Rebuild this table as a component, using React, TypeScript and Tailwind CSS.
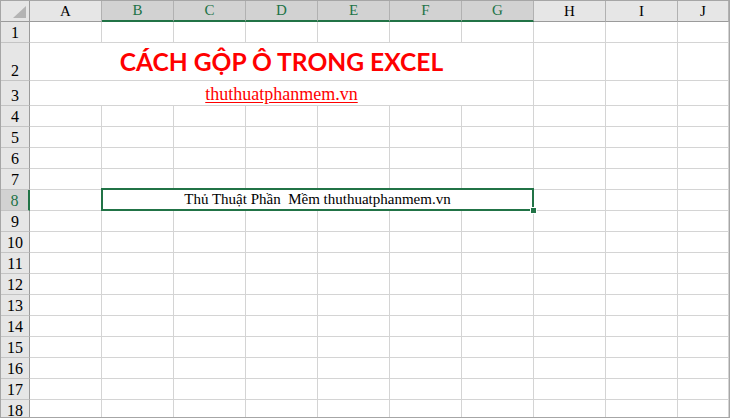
import React from "react";

const cols = ["A", "B", "C", "D", "E", "F", "G", "H", "I", "J"];
const selectedCols = ["B", "C", "D", "E", "F", "G"];
const rows = Array.from({ length: 18 }, (_, i) => i + 1);

const serif = "font-['Liberation_Serif','Times_New_Roman',serif]";
const cell = "border-r border-b border-[#d4d4d4]";

function RowHeader({ n }: { n: number }) {
  const selected = n === 8;
  return (
    <div
      className={`flex items-end justify-center border-b border-[#c4c4c4] text-[16px] leading-none ${serif} ${
        selected
          ? "bg-[#d2d2d2] text-[#217346] border-r-2 border-r-[#217346]"
          : "bg-[#e6e6e6] text-black border-r border-r-[#9b9b9b]"
      }`}
    >
      <span className="pb-[1px]">{n}</span>
    </div>
  );
}

function Blank({ n }: { n: number }) {
  return (
    <>
      {Array.from({ length: n }, (_, i) => (
        <div key={i} className={cell} />
      ))}
    </>
  );
}

export default function App() {
  return (
    <div className="w-[730px] h-[418px] overflow-hidden bg-white border border-[#a6a6a6]">
      <div className="grid grid-cols-[29px_repeat(9,72px)_1fr] grid-rows-[21px_21px_38px_25px_repeat(15,21px)]">
        {/* corner */}
        <div className="relative bg-[#e6e6e6] border-r border-b border-[#9b9b9b]">
          <svg className="absolute right-[3px] bottom-[3px]" width="13" height="12" viewBox="0 0 13 12">
            <polygon points="13,0 13,12 0,12" fill="#b4b4b4" />
          </svg>
        </div>

        {/* column headers */}
        {cols.map((c) => {
          const selected = selectedCols.includes(c);
          return (
            <div
              key={c}
              className={`flex items-end justify-center border-r border-r-[#b1b1b1] text-[15px] leading-none ${serif} ${
                selected
                  ? "bg-[#d2d2d2] text-[#217346] border-b-2 border-b-[#217346]"
                  : "bg-[#e6e6e6] text-black border-b border-b-[#9b9b9b]"
              }`}
            >
              <span className="pb-[2px]">{c}</span>
            </div>
          );
        })}

        {rows.map((r) => {
          if (r === 2) {
            return (
              <React.Fragment key={r}>
                <RowHeader n={r} />
                <div className={`col-span-7 flex items-end justify-center pb-[5px] ${cell}`}>
                  <span className="font-['Lato','Open_Sans',sans-serif] font-bold text-[24.6px] leading-none text-[#ff0000]">
                    CÁCH GỘP Ô TRONG EXCEL
                  </span>
                </div>
                <Blank n={3} />
              </React.Fragment>
            );
          }
          if (r === 3) {
            return (
              <React.Fragment key={r}>
                <RowHeader n={r} />
                <div className={`col-span-7 flex items-end justify-center pb-[2px] ${cell}`}>
                  <span className={`${serif} text-[18px] leading-none text-[#ff0000] underline underline-offset-[2px]`}>
                    thuthuatphanmem.vn
                  </span>
                </div>
                <Blank n={3} />
              </React.Fragment>
            );
          }
          if (r === 8) {
            return (
              <React.Fragment key={r}>
                <RowHeader n={r} />
                <div className={cell} />
                <div className={`relative col-span-6 flex items-end justify-center pb-[3px] ${cell}`}>
                  <span className={`${serif} text-[15px] leading-none text-black whitespace-pre`}>
                    Thủ Thuật Phần  Mềm thuthuatphanmem.vn
                  </span>
                  <div className="absolute -left-px -top-[2px] -right-px -bottom-px border-2 border-[#217346]" />
                  <div className="absolute -right-[4px] -bottom-[4px] w-[7px] h-[7px] bg-[#217346] border border-white" />
                </div>
                <Blank n={3} />
              </React.Fragment>
            );
          }
          return (
            <React.Fragment key={r}>
              <RowHeader n={r} />
              <Blank n={10} />
            </React.Fragment>
          );
        })}
      </div>
    </div>
  );
}
